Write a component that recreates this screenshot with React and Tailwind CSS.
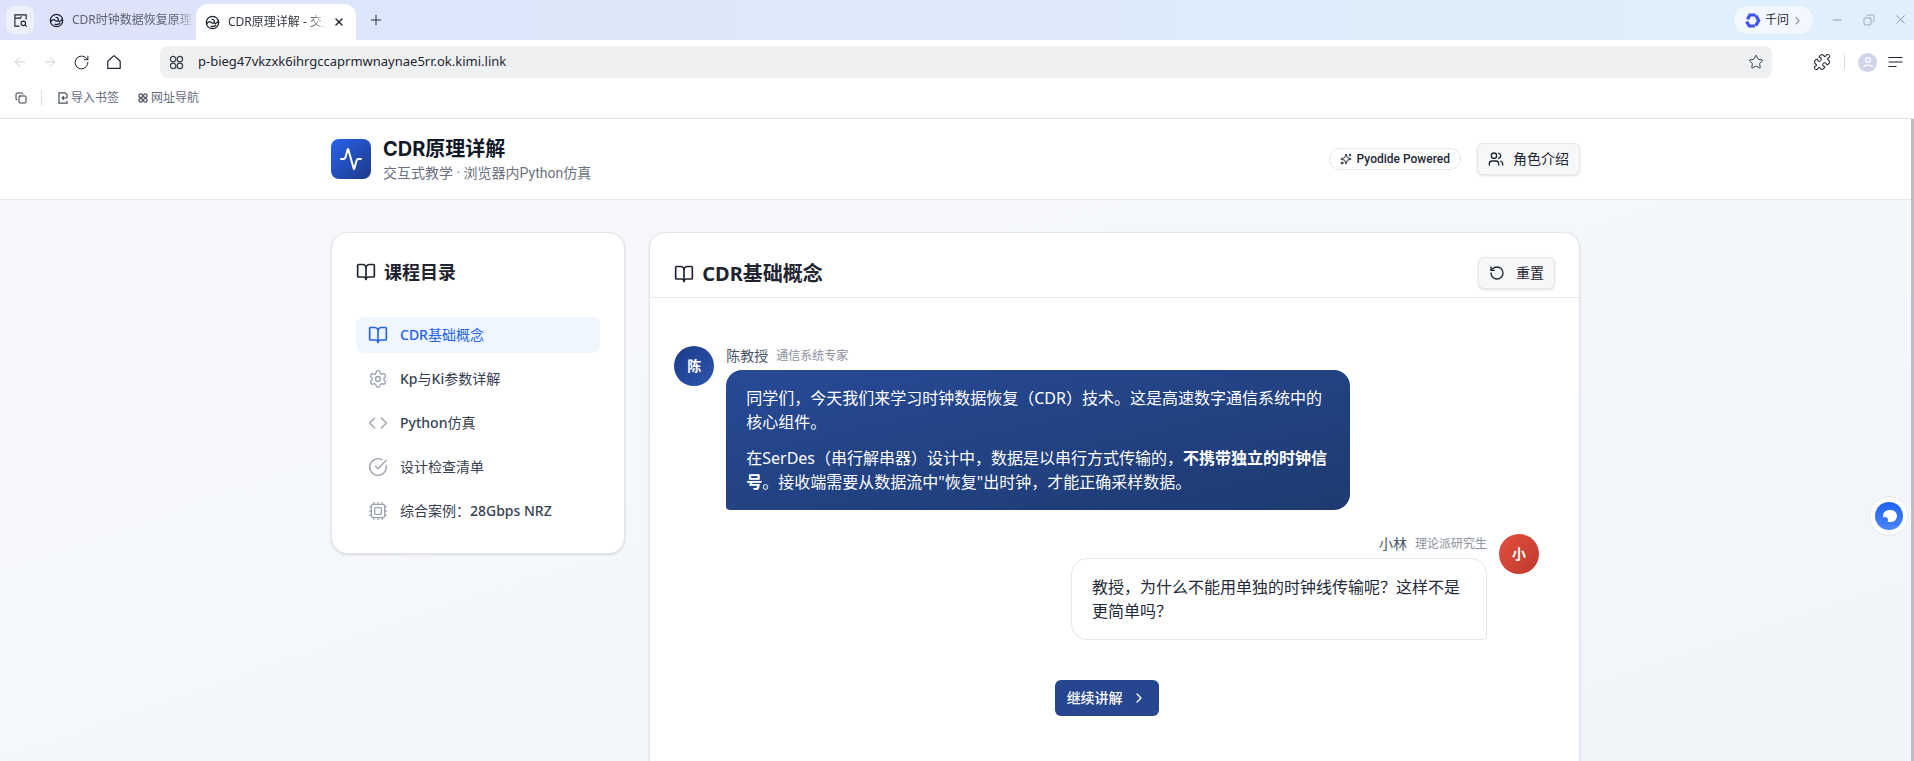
import React from 'react';
import {
  Activity, ArrowLeft, ArrowRight, BookOpen, ChevronRight, CircleCheckBig, Code, Copy, Cpu, Minus, Plus, Puzzle,
  RotateCcw, RotateCw, Settings, Sparkles, Star, Users, X,
} from 'lucide-react';

const FONT = "font-['Noto_Sans','Noto_Sans_CJK_SC',sans-serif]";

const NAV = [
  { label: <><b className="font-medium">CDR</b>基础概念</>, icon: BookOpen, active: true },
  { label: <><b className="font-medium">Kp</b>与<b className="font-medium">Ki</b>参数详解</>, icon: Settings },
  { label: <><b className="font-medium">Python</b>仿真</>, icon: Code },
  { label: '设计检查清单', icon: CircleCheckBig },
  { label: <>综合案例：<b className="font-medium">28Gbps NRZ</b></>, icon: Cpu },
];

const TabGlobe = () => (
  <svg width="15" height="15" viewBox="0 0 16 16" fill="none" stroke="#1f2430" strokeWidth="1.4" className="shrink-0">
    <circle cx="8" cy="8" r="6.6" />
    <path d="M1.8 9.5c1.5-2.5 3.5-3 5-1.6s3 1 3.2-.8-1.4-2.8-3-2.4M14.2 6.5c-1.5 2.5-3.5 3-5 1.6" />
    <path d="M6 12c2 .6 4.5.2 6-1.6" />
  </svg>
);

const FourRings = ({ size = 15, color = '#3b3f4a', stroke = 1.3 }) => (
  <svg width={size} height={size} viewBox="0 0 16 16" fill="none" stroke={color} strokeWidth={stroke}>
    <circle cx="4.4" cy="4.4" r="2.9" />
    <circle cx="11.6" cy="4.4" r="2.9" />
    <circle cx="4.4" cy="11.6" r="2.9" />
    <circle cx="11.6" cy="11.6" r="2.9" />
  </svg>
);

const BrowserChrome = () => (
  <div className="shrink-0 bg-white">
    <div className="flex h-10 items-end bg-gradient-to-r from-[#dde3fa] to-[#dff0fb] pl-1.5">
      <div className="mb-1.5 flex h-7 w-7 items-center justify-center rounded-lg bg-[#eef1fd]">
        <svg width="15" height="15" viewBox="0 0 16 16" fill="none" stroke="#1f2430" strokeWidth="1.2">
          <path d="M7 14H2V2h12v5M2 5.5h6l1-2" />
          <circle cx="11" cy="11" r="2.4" />
          <path d="M13 13l1.6 1.6" />
        </svg>
      </div>
      <div className="mb-0 flex h-10 w-[162px] items-center gap-2 pl-[15px]">
        <TabGlobe />
        <span className="w-[122px] overflow-hidden whitespace-nowrap text-xs text-[#5d6270] [mask-image:linear-gradient(to_right,black_85%,transparent)]">
          CDR时钟数据恢复原理详解
        </span>
      </div>
      <div className="flex h-9 w-40 items-center rounded-t-xl bg-white pl-[9px]">
        <TabGlobe />
        <span className="ml-2 w-[98px] overflow-hidden whitespace-nowrap text-xs text-[#33363f] [mask-image:linear-gradient(to_right,black_82%,transparent)]">
          CDR原理详解 - 交互式教学
        </span>
        <X size={12} strokeWidth={3} className="ml-[7px] text-[#2a2d36]" />
      </div>
      <div className="flex h-10 w-10 items-center justify-center">
        <Plus size={16} strokeWidth={1.4} className="text-[#1f2430]" />
      </div>
      <div className="flex-1" />
      <div className="mb-1.5 flex h-7 w-[79px] items-center rounded-full bg-[#f2f8fe] pl-[10px]">
        <svg width="17" height="17" viewBox="0 0 16 16" fill="none" stroke="#3f51f5" strokeWidth="3">
          <path d="M3.3 6.8 L5.5 2.8 H11" />
          <path d="M11.2 3.2 L13.8 8 L11 13" />
          <path d="M10.2 13.2 H5 L2.4 9" />
        </svg>
        <span className="ml-[4px] text-xs text-[#22252e]">千问</span>
        <ChevronRight size={13} strokeWidth={1.4} className="ml-[2px] text-[#22252e]" />
      </div>
      <div className="mb-[13px] ml-4 flex w-[85px] items-center justify-between pl-px pr-1.5 text-[#70747f]">
        <Minus size={14} strokeWidth={1.1} />
        <Copy size={12} strokeWidth={1.1} className="-scale-x-100" />
        <X size={15} strokeWidth={1.1} />
      </div>
    </div>

    <div className="flex h-[38px] items-start pt-1.5">
      <div className="flex h-8 w-40 items-center pl-3 text-[#1f2430]">
        <ArrowLeft size={16} strokeWidth={1.2} className="text-[#c3c6cf]" />
        <ArrowRight size={16} strokeWidth={1.2} className="ml-[14px] text-[#c3c6cf]" />
        <RotateCw size={17} strokeWidth={1.4} className="ml-[15px]" />
        <svg width="16" height="16" viewBox="0 0 16 16" fill="none" stroke="#1f2430" strokeWidth="1.2" strokeLinejoin="round" className="ml-[16px]">
          <path d="M1.8 7.2 8 1.6l6.2 5.6V14.4H1.8z" />
        </svg>
      </div>
      <div className="flex h-8 w-[1612px] items-center rounded-lg bg-[#eff0f2] pl-[9px] pr-[8px]">
        <FourRings />
        <span className="ml-[14px] flex-1 text-[13px] text-[#23262f]">p-bieg47vkzxk6ihrgccaprmwnaynae5rr.ok.kimi.link</span>
        <Star size={16} strokeWidth={1.3} className="text-[#1f2430]" />
      </div>
      <div className="flex h-8 flex-1 items-center pl-[41px] text-[#1f2430]">
        <Puzzle size={18} strokeWidth={1.4} />
        <div className="ml-[13px] h-3.5 w-px bg-[#d9dbe0]" />
        <div className="ml-[13px] flex h-[19px] w-[19px] items-center justify-center rounded-full bg-[#cfd4e8]">
          <svg width="12" height="12" viewBox="0 0 12 12" fill="none" stroke="#fff" strokeWidth="1.2">
            <circle cx="6" cy="4" r="2.4" />
            <path d="M1.5 11c1-2.4 8-2.4 9 0" />
          </svg>
        </div>
        <svg width="15" height="12" viewBox="0 0 15 12" fill="none" stroke="#1f2430" strokeWidth="1.2" className="ml-[11px]">
          <path d="M.5 1.5h14M.5 6h14M.5 10.5h8" />
        </svg>
      </div>
    </div>

    <div className="flex h-[41px] items-center border-b border-[#e2e3e7] pl-[15px] text-xs text-[#666b7e]">
      <Copy size={12} strokeWidth={1.8} className="text-[#1f2430]" />
      <div className="ml-[14px] h-4 w-px bg-[#dcdde1]" />
      <svg width="10" height="12" viewBox="0 0 10 12" fill="none" stroke="#4b4f5c" strokeWidth="1.2" className="ml-[16px]">
        <path d="M9 6V2.5L7 .8H1v10.4h8V9M9 6H4.5M6 4.3L4.2 6 6 7.7" />
      </svg>
      <span className="ml-[3px]">导入书签</span>
      <span className="ml-[19px]"><FourRings size={10} color="#5f6370" stroke={2.2} /></span>
      <span className="ml-[3px]">网址导航</span>
    </div>
  </div>
);

const Sidebar = () => (
  <aside className="self-start rounded-2xl border border-[#e2e4ea] bg-white p-6 shadow-sm">
    <h2 className="mb-[31px] flex items-center gap-2 pt-px text-lg font-bold text-[#1f2430]">
      <BookOpen size={20} strokeWidth={2} />
      课程目录
    </h2>
    <nav className="flex flex-col gap-2">
      {NAV.map(({ label, icon: Icon, active }, i) => (
        <div
          key={i}
          className={`flex items-center gap-3 rounded-lg px-3 py-2 text-sm ${active ? 'bg-[#eff6ff] text-[#2563eb]' : 'text-[#374151]'}`}
        >
          <Icon size={20} strokeWidth={active ? 2 : 1.6} className={active ? 'text-[#2563eb]' : 'text-[#9ca3af]'} />
          <span>{label}</span>
        </div>
      ))}
    </nav>
  </aside>
);

const Meta = ({ name, role, right }) => (
  <div className={`mb-1 flex h-5 items-center gap-2 ${right ? 'justify-end' : ''}`}>
    <span className="text-sm text-[#4b5563]">{name}</span>
    <span className="text-xs text-[#8b909c]">{role}</span>
  </div>
);

const Lesson = () => (
  <main className="col-span-3 min-h-[640px] rounded-2xl border border-[#e2e4ea] bg-white shadow-sm">
    <div className="flex items-start justify-between border-b border-[#e5e7eb] px-6 pb-2 pt-6">
      <h2 className="flex h-8 items-center gap-2 pt-px text-xl font-bold text-[#1f2430]">
        <BookOpen size={20} strokeWidth={2} />
        CDR基础概念
      </h2>
      <button className="flex h-8 items-center gap-[11px] rounded-md border border-[#e5e7eb] bg-[#f6f7f8] px-2.5 text-sm text-[#1f2430] shadow-sm">
        <RotateCcw size={16} />
        重置
      </button>
    </div>
    <div className="pl-6 pr-10 pt-12">
      <div className="flex gap-3">
        <div className="flex h-10 w-10 shrink-0 items-center justify-center rounded-full bg-gradient-to-br from-[#1e3a8a] to-[#2b57ad] text-sm font-bold text-white">陈</div>
        <div>
          <Meta name="陈教授" role="通信系统专家" />
          <div className="w-[624px] rounded-2xl rounded-bl-sm bg-gradient-to-br from-[#274a96] to-[#1e3a70] px-5 py-4 text-white">
            <p className="mb-3 text-base leading-6">同学们，今天我们来学习时钟数据恢复（CDR）技术。这是高速数字通信系统中的核心组件。</p>
            <p className="text-base leading-6">
              在SerDes（串行解串器）设计中，数据是以串行方式传输的，<strong className="font-bold">不携带独立的时钟信号</strong>。接收端需要从数据流中"恢复"出时钟，才能正确采样数据。
            </p>
          </div>
        </div>
      </div>

      <div className="mt-6 flex justify-end gap-3">
        <div>
          <Meta name="小林" role="理论派研究生" right />
          <div className="w-[416px] rounded-2xl rounded-br-sm border border-[#e5e7eb] bg-white px-5 py-4 text-base leading-6 text-[#1f2937]">
            教授，为什么不能用单独的时钟线传输呢？这样不是更简单吗？
          </div>
        </div>
        <div className="flex h-10 w-10 shrink-0 items-center justify-center rounded-full bg-gradient-to-br from-[#e34e3d] to-[#bf3a2e] text-sm font-bold text-white">小</div>
      </div>

      <div className="mt-10 flex justify-center">
        <button className="flex h-9 items-center gap-2 rounded-md bg-[#26468f] px-3 text-sm font-medium text-white">
          继续讲解
          <ChevronRight size={16} />
        </button>
      </div>
    </div>
  </main>
);

export default function App() {
  return (
    <div className={`relative flex h-screen flex-col overflow-hidden bg-white ${FONT}`}>
      <BrowserChrome />
      <div className="flex min-h-0 flex-1">
        <div className="min-w-0 flex-1 overflow-hidden bg-gradient-to-br from-[#f8f9fd] to-[#f1f5f9]">
          <header className="border-b border-[#e5e7eb] bg-white">
            <div className="mx-auto flex h-20 max-w-[1280px] items-center justify-between px-[15.5px]">
              <div className="flex items-center gap-3">
                <div className="flex h-10 w-10 items-center justify-center rounded-lg bg-gradient-to-br from-[#2563eb] to-[#1e3a8a]">
                  <Activity size={24} strokeWidth={2} className="text-white" />
                </div>
                <div>
                  <h1 className="font-['Inter','Noto_Sans_CJK_SC',sans-serif] text-xl font-bold leading-7 text-[#111827]">CDR原理详解</h1>
                  <p className="font-['Roboto','Noto_Sans_CJK_SC',sans-serif] text-sm leading-5 text-[#6b7280]">交互式教学 · 浏览器内Python仿真</p>
                </div>
              </div>
              <div className="flex items-center gap-4">
                <div className="flex h-[22px] items-center gap-[5px] rounded-full border border-[#e5e7eb] bg-white px-2.5 font-['Roboto',sans-serif] text-xs font-medium text-[#1f2937]">
                  <Sparkles size={12} />
                  Pyodide Powered
                </div>
                <button className="flex h-8 items-center gap-[9px] rounded-md border border-[#e5e7eb] bg-[#f6f7f8] px-2.5 text-sm text-[#1f2430] shadow-sm">
                  <Users size={16} />
                  角色介绍
                </button>
              </div>
            </div>
          </header>
          <div className="mx-auto grid max-w-[1280px] grid-cols-4 gap-6 px-[15.5px] py-8">
            <Sidebar />
            <Lesson />
          </div>
        </div>
        <div className="w-[3px] shrink-0 bg-[#bbbcc6]" />
      </div>

      <div className="absolute left-[1869px] top-[496px] flex h-10 w-10 items-center justify-center rounded-full border border-[#e8e9ee] bg-white">
        <div className="relative h-7 w-7 overflow-hidden rounded-full bg-gradient-to-b from-[#1d62f0] to-[#4a85fb]">
          <div className="absolute left-[8px] top-[8px] h-3 w-3.5 rounded-full bg-white" />
          <div className="absolute left-[7px] top-[15px] h-1.5 w-1.5 rounded-full bg-[#3a78f6]" />
        </div>
      </div>
    </div>
  );
}
